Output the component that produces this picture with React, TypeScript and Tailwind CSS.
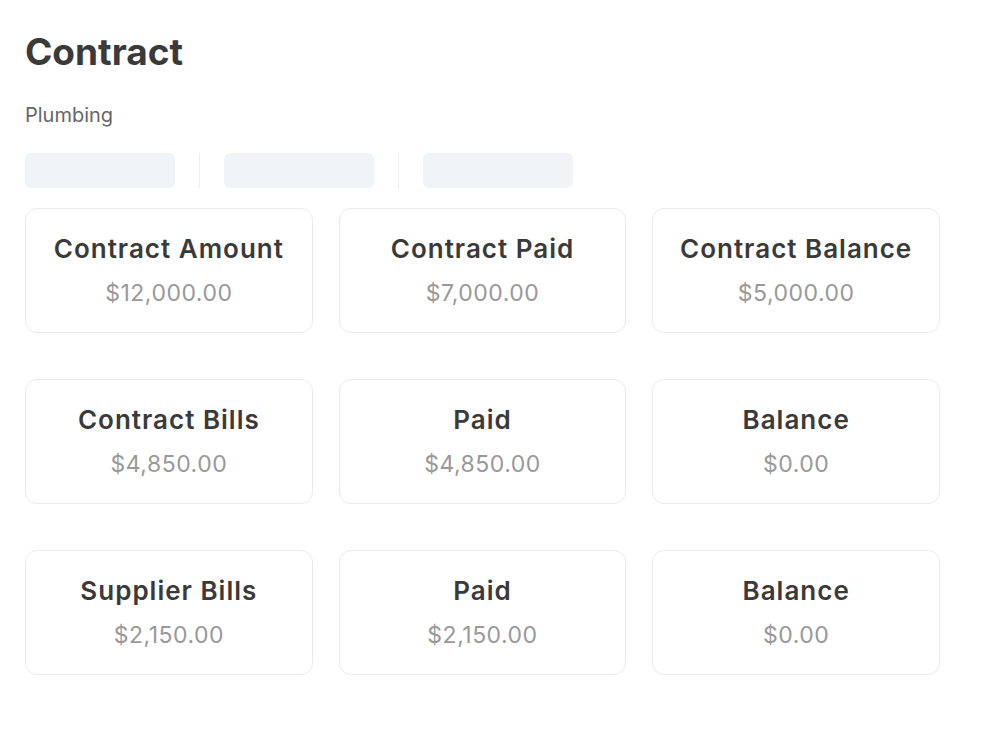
import React from 'react';

interface Stat {
    label: string;
    value: string;
}

const rows: Stat[][] = [
    [
        { label: 'Contract Amount', value: '$12,000.00' },
        { label: 'Contract Paid', value: '$7,000.00' },
        { label: 'Contract Balance', value: '$5,000.00' },
    ],
    [
        { label: 'Contract Bills', value: '$4,850.00' },
        { label: 'Paid', value: '$4,850.00' },
        { label: 'Balance', value: '$0.00' },
    ],
    [
        { label: 'Supplier Bills', value: '$2,150.00' },
        { label: 'Paid', value: '$2,150.00' },
        { label: 'Balance', value: '$0.00' },
    ],
];

const StatCard: React.FC<{ stat: Stat }> = ({ stat }) => (
    <div className="flex h-[125px] flex-col items-center justify-center rounded-xl border border-[#ebebeb] bg-white">
        <p className="text-[26px] font-semibold leading-none tracking-[1px] text-[#3a3a3a]">{stat.label}</p>
        <p className="mt-[20px] text-[23px] leading-none tracking-[0.5px] text-[#999999]">{stat.value}</p>
    </div>
);

export default function App() {
    return (
        <div className="min-h-screen bg-white px-[25px] pt-[33px] font-['Inter',sans-serif]">
            <h1 className="text-[37px] font-bold leading-[38px] text-[#3a3a3a]">Contract</h1>
            <p className="mt-[32px] text-[20px] leading-[24px] text-[#666666]">Plumbing</p>

            <div className="mt-[26px] flex items-center gap-6">
                <div className="h-[35px] w-[150px] rounded-md bg-[#f0f4f7]" />
                <div className="h-[35px] w-px bg-[#eeeeee]" />
                <div className="h-[35px] w-[150px] rounded-md bg-[#f0f4f7]" />
                <div className="h-[35px] w-px bg-[#eeeeee]" />
                <div className="h-[35px] w-[150px] rounded-md bg-[#f0f4f7]" />
            </div>

            <div className="mt-[20px] flex w-[915px] flex-col gap-[46px]">
                {rows.map((row, i) => (
                    <div key={i} className="grid grid-cols-3 gap-[26px]">
                        {row.map((stat) => (
                            <StatCard key={stat.label} stat={stat} />
                        ))}
                    </div>
                ))}
            </div>
        </div>
    );
}
